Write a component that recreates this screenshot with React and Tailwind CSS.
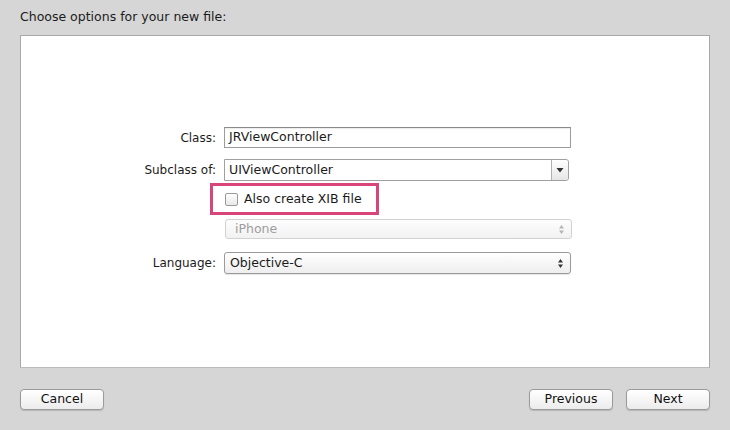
import React from "react";

const font = { fontFamily: '"DejaVu Sans", "Liberation Sans", sans-serif' };

function Arrows({ color = "#333" }) {
  return (
    <svg width="7" height="11" viewBox="0 0 7 11">
      <path d="M3.5 1 L6 4.5 L1 4.5 Z" fill={color} />
      <path d="M3.5 10 L6 6.5 L1 6.5 Z" fill={color} />
    </svg>
  );
}

function Button({ children }) {
  return (
    <div className="w-[84px] h-[21px] rounded-[4px] border border-[#9a9a9a] bg-gradient-to-b from-[#ffffff] to-[#ececec] shadow-[0_1px_1px_rgba(0,0,0,0.15)] flex items-center justify-center text-[12.5px] text-[#111]">
      {children}
    </div>
  );
}

export default function App() {
  return (
    <div className="w-[730px] h-[430px] bg-[#d6d6d6] flex flex-col text-[#1b1b1b]" style={font}>
      <div className="h-[35px] pl-[20px] pt-[9px] text-[12.5px] leading-[16px]">Choose options for your new file:</div>
      <div className="mx-[20px] h-[333px] bg-white border border-[#a8a8a8] border-b-[#bcbcbc] flex flex-col">
        <div className="pt-[91px] flex flex-col">
          {/* Class */}
          <div className="flex items-center h-[21px]">
            <div className="w-[197px] text-right text-[12px] pr-[2px]">Class:</div>
            <div className="ml-[6px] w-[347px] h-[21px] border border-[#9c9c9c] border-t-[#8a8a8a] bg-white flex items-center pl-[4px] text-[12.5px] shadow-[inset_0_1px_1px_rgba(0,0,0,0.08)]">
              JRViewController
            </div>
          </div>
          {/* Subclass */}
          <div className="flex items-center h-[22px] mt-[11px]">
            <div className="w-[197px] text-right text-[12px] pr-[2px]">Subclass of:</div>
            <div className="ml-[6px] w-[345px] h-[22px] border border-[#a0a0a0] rounded-r-[3px] bg-white flex items-stretch text-[12.5px]">
              <div className="flex-1 flex items-center pl-[4px]">UIViewController</div>
              <div className="w-[17px] border-l border-[#b0b0b0] bg-gradient-to-b from-[#ffffff] to-[#e6e6e6] flex items-center justify-center rounded-r-[3px]">
                <svg width="8" height="6" viewBox="0 0 8 6"><path d="M0.5 1 L7.5 1 L4 5.5 Z" fill="#333" /></svg>
              </div>
            </div>
          </div>
          {/* Checkbox highlight */}
          <div className="flex h-[32px] mt-[2px]">
            <div className="ml-[189px] w-[169px] h-[32px] border-[3px] border-[#d9457a] flex items-center pl-[12px]">
              <div className="w-[13px] h-[13px] rounded-[2px] border border-[#9a9a9a] bg-gradient-to-b from-[#ffffff] to-[#e8e8e8]" />
              <div className="ml-[6px] text-[12.5px]">Also create XIB file</div>
            </div>
          </div>
          {/* iPhone */}
          <div className="flex h-[20px] mt-[4px]">
            <div className="ml-[204px] w-[347px] h-[20px] border border-[#d2d2d2] rounded-[3px] bg-gradient-to-b from-[#fdfdfd] to-[#f2f2f2] flex items-center justify-between pl-[9px] pr-[6px] text-[12.5px] text-[#9d9d9d]">
              <span>iPhone</span>
              <Arrows color="#b5b5b5" />
            </div>
          </div>
          {/* Language */}
          <div className="flex items-center h-[22px] mt-[13px]">
            <div className="w-[197px] text-right text-[12px] pr-[2px]">Language:</div>
            <div className="ml-[6px] w-[347px] h-[22px] border border-[#9a9a9a] rounded-[3px] bg-gradient-to-b from-[#ffffff] to-[#eeeeee] shadow-[0_1px_1px_rgba(0,0,0,0.1)] flex items-center justify-between pl-[5px] pr-[6px] text-[12.5px]">
              <span>Objective-C</span>
              <Arrows color="#333" />
            </div>
          </div>
        </div>
      </div>
      <div className="flex items-center justify-between px-[20px] mt-[21px]">
        <Button>Cancel</Button>
        <div className="flex gap-[13px]">
          <Button>Previous</Button>
          <Button>Next</Button>
        </div>
      </div>
    </div>
  );
}
